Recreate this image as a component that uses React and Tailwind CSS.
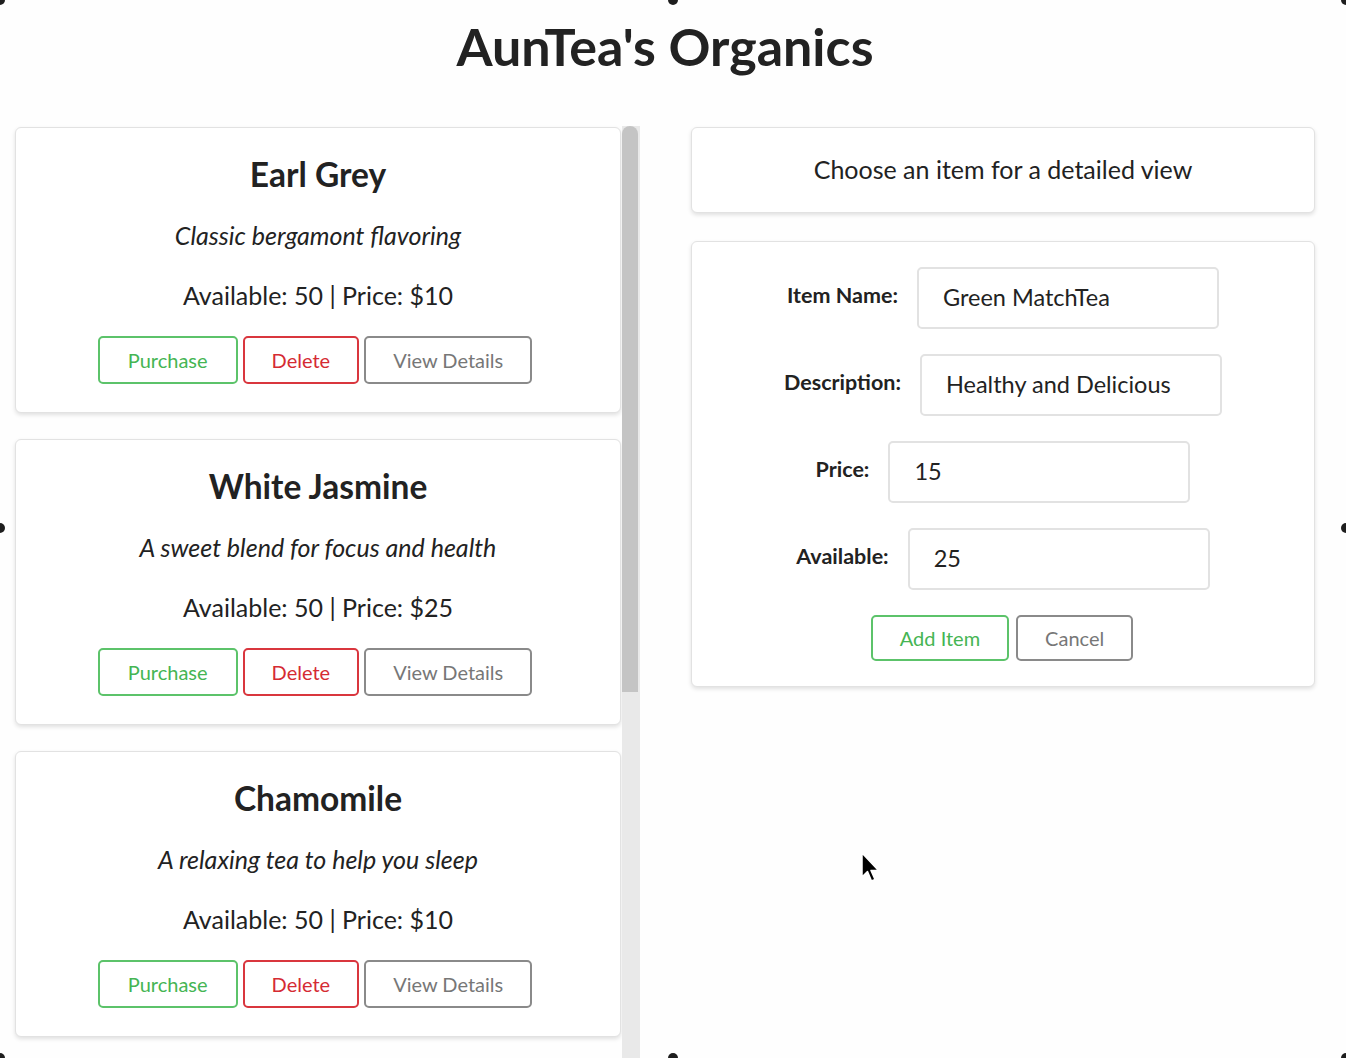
import React from "react";

const teas = [
  { name: "Earl Grey", desc: "Classic bergamont flavoring", avail: 50, price: 10 },
  { name: "White Jasmine", desc: "A sweet blend for focus and health", avail: 50, price: 25 },
  { name: "Chamomile", desc: "A relaxing tea to help you sleep", avail: 50, price: 10 },
];

function TeaCard({ tea }) {
  return (
    <div className="w-[606px] shrink-0 rounded-[6px] border border-[#e2e2e2] bg-white shadow-[0_2px_4px_rgba(0,0,0,0.12)] pt-[26px] pb-[28px] flex flex-col items-center text-[#222]">
      <div className="text-[33.5px] leading-[40px] font-bold">{tea.name}</div>
      <div className="mt-[26px] text-[25px] leading-[30px] italic">{tea.desc}</div>
      <div className="mt-[30px] text-[25px] leading-[30px]">
        Available: {tea.avail} | Price: ${tea.price}
      </div>
      <div className="mt-[26px] flex gap-[5px] pr-[6px]">
        <button className="h-[48px] px-[28px] border-2 border-[#5cc36a] rounded-[5px] text-[20px] text-[#45b553] bg-white">Purchase</button>
        <button className="h-[48px] px-[27px] border-2 border-[#d9363e] rounded-[5px] text-[20px] text-[#d52b33] bg-white">Delete</button>
        <button className="h-[48px] px-[27px] border-2 border-[#8a8a8a] rounded-[5px] text-[20px] text-[#777] bg-white">View Details</button>
      </div>
    </div>
  );
}

function Field({ label, value }) {
  return (
    <div className="flex items-center justify-center gap-[19px]">
      <div className="text-[21.5px] font-bold text-[#222] -mt-[6px]">{label}</div>
      <div className="w-[302px] h-[62px] border-2 border-[#e2e2e2] rounded-[5px] flex items-center pl-[24px] text-[23.5px] text-[#222]">
        {value}
      </div>
    </div>
  );
}

function Dot({ className }) {
  return <div className={"absolute w-[10px] h-[10px] rounded-full bg-[#1e1e1e] " + className} />;
}

export default function App() {
  return (
    <div
      className="relative w-[1346px] h-[1058px] overflow-hidden bg-[#fefefe]"
      style={{ fontFamily: "Lato, 'Open Sans', sans-serif" }}
    >
      <h1 className="text-center text-[52px] leading-[60px] font-bold text-[#222] pt-[16px] pr-[16px]">
        AunTea's Organics
      </h1>
      <div className="mt-[50px] flex">
        <div className="ml-[15px] flex">
          <div className="flex flex-col gap-[26px] pt-[1px]">
            {teas.map((t) => (
              <TeaCard key={t.name} tea={t} />
            ))}
          </div>
          <div className="ml-[1px] w-[18px] h-[940px] bg-[#e9e9e9]">
            <div className="w-[16px] h-[566px] bg-[#c4c4c4] rounded-t-[8px]" />
          </div>
        </div>
        <div className="ml-[51px] w-[624px] flex flex-col pt-[1px]">
          <div className="h-[86px] rounded-[6px] border border-[#e2e2e2] bg-white shadow-[0_2px_4px_rgba(0,0,0,0.12)] flex items-center justify-center text-[25px] text-[#222]">
            Choose an item for a detailed view
          </div>
          <div className="mt-[28px] rounded-[6px] border border-[#e2e2e2] bg-white shadow-[0_2px_4px_rgba(0,0,0,0.12)] pt-[25px] pb-[25px] flex flex-col gap-[25px]">
            <Field label="Item Name:" value="Green MatchTea" />
            <Field label="Description:" value="Healthy and Delicious" />
            <Field label="Price:" value="15" />
            <Field label="Available:" value="25" />
            <div className="flex justify-center gap-[7px] pr-[2px]">
              <button className="h-[46px] px-[27px] border-2 border-[#5cc36a] rounded-[5px] text-[20px] text-[#45b553] bg-white">Add Item</button>
              <button className="h-[46px] px-[27px] border-2 border-[#8a8a8a] rounded-[5px] text-[20px] text-[#777] bg-white">Cancel</button>
            </div>
          </div>
        </div>
      </div>

      <svg className="absolute left-[860px] top-[852px]" width="22" height="32" viewBox="0 0 22 32">
        <path d="M2 1 L2 25 L7.5 19.5 L11.5 29 L15 27.5 L11 18.5 L18.5 18.5 Z" fill="#000" stroke="#fff" strokeWidth="1.5" strokeLinejoin="round" />
      </svg>

      <Dot className="left-[-5px] top-[-5px]" />
      <Dot className="left-[668px] top-[-5px]" />
      <Dot className="left-[1341px] top-[-5px]" />
      <Dot className="left-[-5px] top-[523px]" />
      <Dot className="left-[1341px] top-[523px]" />
      <Dot className="left-[-5px] top-[1053px]" />
      <Dot className="left-[668px] top-[1053px]" />
      <Dot className="left-[1341px] top-[1053px]" />
    </div>
  );
}
